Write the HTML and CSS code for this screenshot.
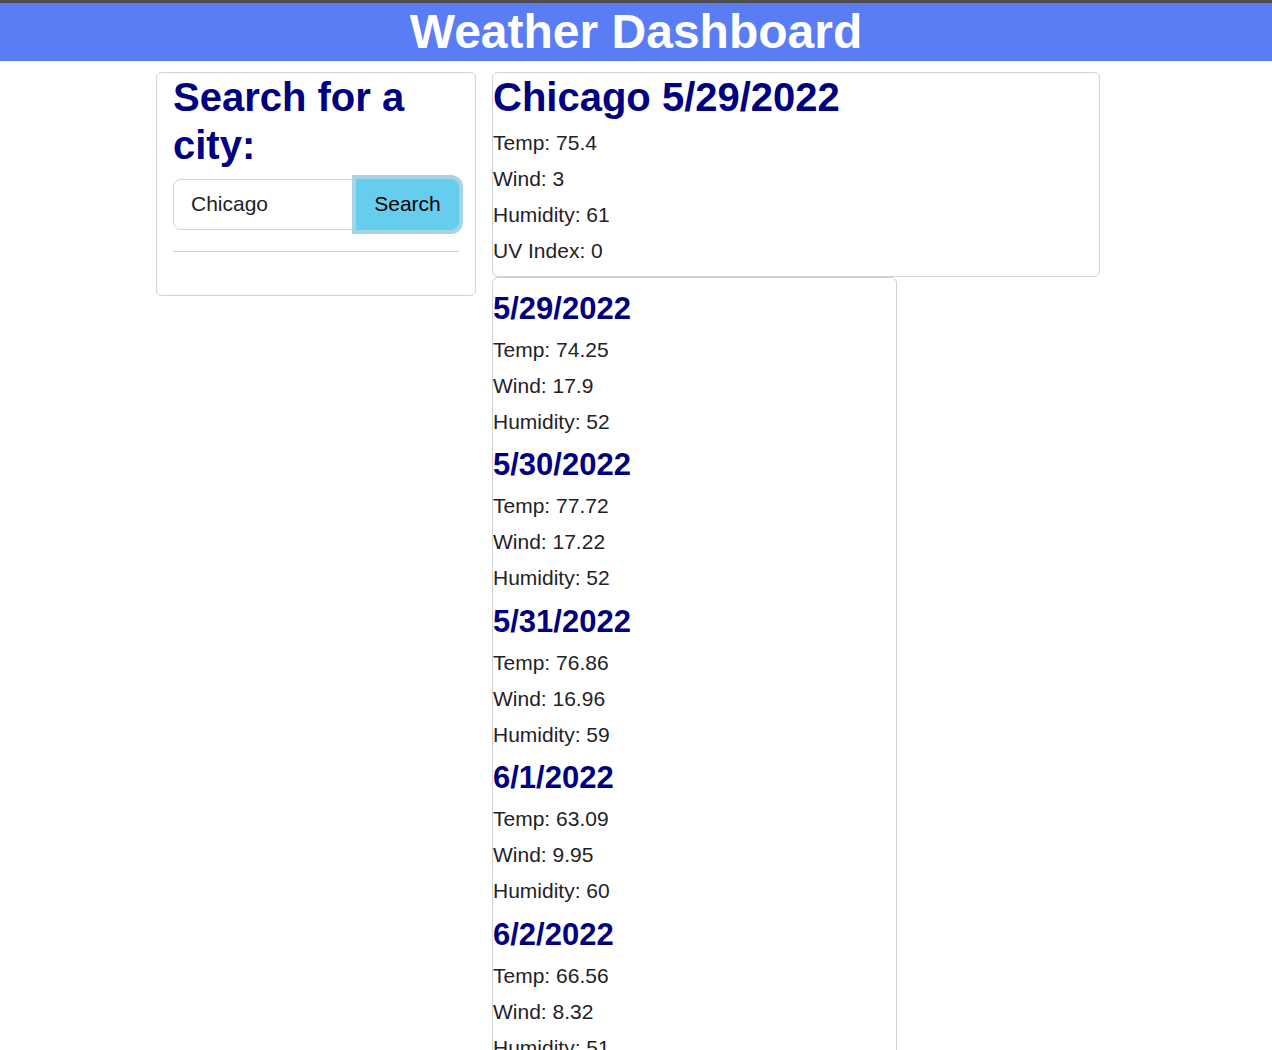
FILE: index.html
```html
<!DOCTYPE html>
<html lang="en">
<head>
<meta charset="utf-8">
<title>Weather Dashboard</title>
<link rel="stylesheet" href="styles.css">
</head>
<body>
<header class="site-header">
  <h1 class="site-title">Weather Dashboard</h1>
</header>
<main class="layout">
  <aside class="search-card">
    <h1 class="card-heading">Search for a city:</h1>
    <form class="input-group">
      <input class="city-input" type="text" value="Chicago">
      <button class="search-btn" type="button">Search</button>
    </form>
    <hr class="divider">
  </aside>
  <section class="results">
    <div class="current-card">
      <h1 class="card-heading">Chicago 5/29/2022</h1>
      <p class="stat">Temp: 75.4</p>
      <p class="stat">Wind: 3</p>
      <p class="stat">Humidity: 61</p>
      <p class="stat">UV Index: 0</p>
    </div>
    <div class="forecast-card">
      <h2 class="day-heading">5/29/2022</h2>
      <p class="stat">Temp: 74.25</p>
      <p class="stat">Wind: 17.9</p>
      <p class="stat">Humidity: 52</p>
      <h2 class="day-heading">5/30/2022</h2>
      <p class="stat">Temp: 77.72</p>
      <p class="stat">Wind: 17.22</p>
      <p class="stat">Humidity: 52</p>
      <h2 class="day-heading">5/31/2022</h2>
      <p class="stat">Temp: 76.86</p>
      <p class="stat">Wind: 16.96</p>
      <p class="stat">Humidity: 59</p>
      <h2 class="day-heading">6/1/2022</h2>
      <p class="stat">Temp: 63.09</p>
      <p class="stat">Wind: 9.95</p>
      <p class="stat">Humidity: 60</p>
      <h2 class="day-heading">6/2/2022</h2>
      <p class="stat">Temp: 66.56</p>
      <p class="stat">Wind: 8.32</p>
      <p class="stat">Humidity: 51</p>
    </div>
  </section>
</main>
</body>
</html>
```

FILE: styles.css
```css
* { box-sizing: border-box; }

body {
  margin: 0;
  background: #ffffff;
  color: #1f2226;
  font-family: "Liberation Sans", Arial, sans-serif;
  font-size: 21px;
}

.site-header {
  border-top: 3px solid #4e4e50;
  background: #5a7cf5;
}

.site-title {
  margin: 0;
  font-family: "Liberation Sans", Arial, sans-serif;
  font-size: 48px;
  font-weight: 700;
  line-height: 1.2;
  color: #ffffff;
  text-align: center;
}

.layout {
  display: flex;
  align-items: flex-start;
  gap: 16px;
  padding: 11px 0 0 156px;
}

.search-card {
  width: 320px;
  flex: none;
  border: 1px solid #d2d2d2;
  border-radius: 6px;
  padding: 0 16px;
}

.card-heading {
  margin: 0 0 7px;
  font-size: 40px;
  font-weight: 700;
  line-height: 48px;
  color: #000080;
}

.search-card .card-heading {
  margin-bottom: 10px;
}

.input-group {
  display: flex;
  margin: 0;
}

.city-input {
  width: 183px;
  height: 51px;
  border: 1px solid #d2d6da;
  border-radius: 8px 0 0 8px;
  padding: 0 16px 0 17px;
  font-family: "Liberation Sans", Arial, sans-serif;
  font-size: 21px;
  color: #1f2226;
  background: #fff;
  outline: none;
}

.search-btn {
  width: 103px;
  height: 51px;
  margin-left: 0;
  border: 1px solid #66ccee;
  border-radius: 0 8px 8px 0;
  background: #66cdee;
  color: #000;
  font-family: "Liberation Sans", Arial, sans-serif;
  font-size: 21px;
  box-shadow: 0 0 0 4px #a5d5e5;
  position: relative;
  z-index: 1;
}

.divider {
  margin: 21px 0 43px;
  border: 0;
  border-top: 1px solid #cccccc;
}

.results {
  display: flex;
  flex-direction: column;
  align-items: flex-start;
}

.current-card {
  width: 608px;
  border: 1px solid #d2d2d2;
  border-radius: 6px;
  padding: 0 0 3px;
}

.current-card .stat {
  margin-bottom: 6.3px;
}

.forecast-card {
  width: 405px;
  border: 1px solid #d2d2d2;
  border-radius: 6px;
  padding: 2.5px 0 20px;
}

.day-heading {
  margin: 9.3px 0 8px;
  font-size: 31px;
  font-weight: 700;
  line-height: 1.2;
  color: #000080;
}

.stat {
  margin: 0 0 6px;
  line-height: 30px;
}
```
